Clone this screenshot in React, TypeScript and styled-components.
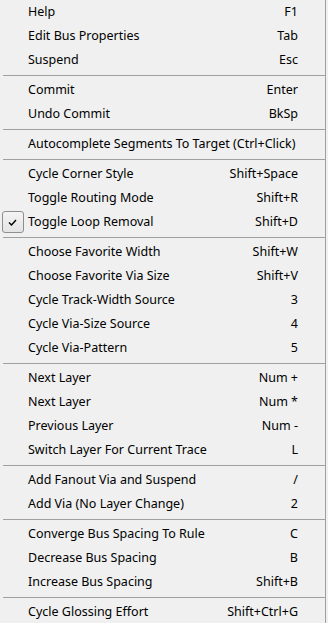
import styled, { createGlobalStyle } from "styled-components";

const Global = createGlobalStyle`
  html, body {
    margin: 0;
    padding: 0;
    background: #f0f0f0;
  }
`;

type Entry = { label: string; key: string; checked?: boolean } | "sep";

const entries: Entry[] = [
  { label: "Help", key: "F1" },
  { label: "Edit Bus Properties", key: "Tab" },
  { label: "Suspend", key: "Esc" },
  "sep",
  { label: "Commit", key: "Enter" },
  { label: "Undo Commit", key: "BkSp" },
  "sep",
  { label: "Autocomplete Segments To Target (Ctrl+Click)", key: "" },
  "sep",
  { label: "Cycle Corner Style", key: "Shift+Space" },
  { label: "Toggle Routing Mode", key: "Shift+R" },
  { label: "Toggle Loop Removal", key: "Shift+D", checked: true },
  "sep",
  { label: "Choose Favorite Width", key: "Shift+W" },
  { label: "Choose Favorite Via Size", key: "Shift+V" },
  { label: "Cycle Track-Width Source", key: "3" },
  { label: "Cycle Via-Size Source", key: "4" },
  { label: "Cycle Via-Pattern", key: "5" },
  "sep",
  { label: "Next Layer", key: "Num +" },
  { label: "Next Layer", key: "Num *" },
  { label: "Previous Layer", key: "Num -" },
  { label: "Switch Layer For Current Trace", key: "L" },
  "sep",
  { label: "Add Fanout Via and Suspend", key: "/" },
  { label: "Add Via (No Layer Change)", key: "2" },
  "sep",
  { label: "Converge Bus Spacing To Rule", key: "C" },
  { label: "Decrease Bus Spacing", key: "B" },
  { label: "Increase Bus Spacing", key: "Shift+B" },
  "sep",
  { label: "Cycle Glossing Effort", key: "Shift+Ctrl+G" },
];

const Menu = styled.div`
  width: 325px;
  display: flex;
  flex-direction: column;
  background: #f0f0f0;
  border-right: 1px solid #a0a0a0;
  font-family: "Noto Sans", "Open Sans", sans-serif;
  font-size: 12.5px;
  color: #000;
  user-select: none;
`;

const Item = styled.div`
  height: 24px;
  box-sizing: border-box;
  padding: 0 27px 1px 0;
  display: grid;
  grid-template-columns: 28px 1fr auto;
  align-items: center;
`;

const Gutter = styled.div`
  display: flex;
  align-items: center;
  justify-content: center;
  height: 100%;
`;

const CheckBox = styled.span`
  width: 22px;
  height: 22px;
  box-sizing: border-box;
  margin: 1px 0 0 -3px;
  border: 1px solid #8e8e8e;
  border-radius: 3px;
  background: linear-gradient(#f4f4f4, #e4e4e4);
  display: flex;
  align-items: center;
  justify-content: center;
`;

const Label = styled.span`
  white-space: nowrap;
`;

const Shortcut = styled.span`
  white-space: nowrap;
  text-align: right;
`;

const Separator = styled.div`
  height: 6px;
  display: flex;
  align-items: center;
  padding-left: 3px;

  &::after {
    content: "";
    flex: 1;
    height: 1px;
    background: #a0a0a0;
  }
`;

function Check() {
  return (
    <svg width="9" height="7" viewBox="0 0 9 7">
      <path d="M1 3.5 L3.5 6 L8 1" fill="none" stroke="#000" strokeWidth="1.4" />
    </svg>
  );
}

export default function App() {
  return (
    <>
      <Global />
      <Menu>
        {entries.map((e, i) =>
          e === "sep" ? (
            <Separator key={i} />
          ) : (
            <Item key={i}>
              <Gutter>
                {e.checked && (
                  <CheckBox>
                    <Check />
                  </CheckBox>
                )}
              </Gutter>
              <Label>{e.label}</Label>
              <Shortcut>{e.key}</Shortcut>
            </Item>
          )
        )}
      </Menu>
    </>
  );
}
